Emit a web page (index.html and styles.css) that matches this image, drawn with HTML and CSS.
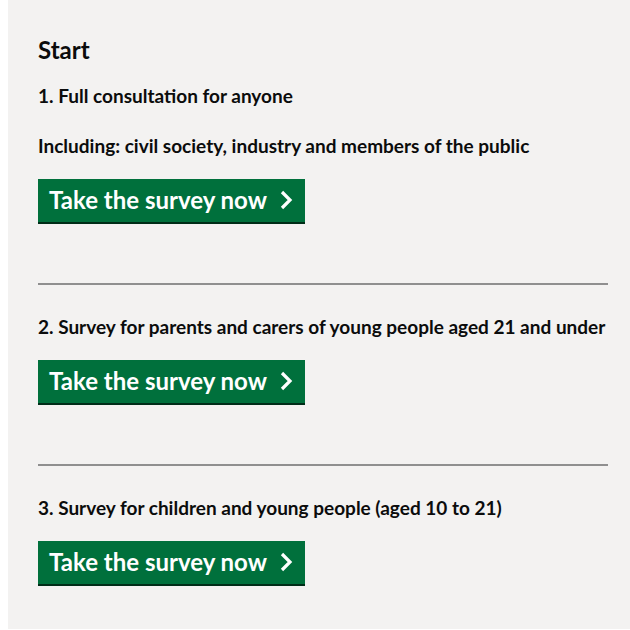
FILE: index.html
```html
<!DOCTYPE html>
<html lang="en">
<head>
    <meta charset="UTF-8">
    <meta name="viewport" content="width=device-width, initial-scale=1.0">
    <title>Start</title>
    <link rel="stylesheet" href="styles.css">
</head>
<body>

<div class="panel">
    <h2 class="titulo">Start</h2>

    <div class="seccion">
        <p class="texto">1. Full consultation for anyone</p>
        <p class="texto">Including: civil society, industry and members of the public</p>
        <a class="boton" href="#">Take the survey now
            <svg class="flecha" width="14" height="20" viewBox="0 0 14 20"><path d="M3 2 L11 10 L3 18" fill="none" stroke="#fff" stroke-width="3.2"/></svg>
        </a>
    </div>

    <hr class="separador">

    <div class="seccion">
        <p class="texto">2. Survey for parents and carers of young people aged 21 and under</p>
        <a class="boton" href="#">Take the survey now
            <svg class="flecha" width="14" height="20" viewBox="0 0 14 20"><path d="M3 2 L11 10 L3 18" fill="none" stroke="#fff" stroke-width="3.2"/></svg>
        </a>
    </div>

    <hr class="separador">

    <div class="seccion">
        <p class="texto">3. Survey for children and young people (aged 10 to 21)</p>
        <a class="boton" href="#">Take the survey now
            <svg class="flecha" width="14" height="20" viewBox="0 0 14 20"><path d="M3 2 L11 10 L3 18" fill="none" stroke="#fff" stroke-width="3.2"/></svg>
        </a>
    </div>
</div>

</body>
</html>
```

FILE: styles.css
```css
*{margin: 0; padding: 0; box-sizing: border-box;}

body{
    margin: 0 0 0 8px;
    font-family: Lato, "Noto Sans", sans-serif;
    color: #0b0c0c;
    background: #fff;
}
.panel{
    width: 630px;
    background: #f3f2f1;
    padding: 35px 30px 45px;
}
.titulo{
    font-size: 24px;
    line-height: 30px;
    font-weight: 700;
    margin-bottom: 18px;
}
.seccion{
    display: flex;
    flex-direction: column;
    align-items: flex-start;
    gap: 25px;
}
.texto{
    font-size: 19px;
    line-height: 25px;
    font-weight: 700;
    white-space: nowrap;
}
.boton{
    display: inline-flex;
    align-items: center;
    gap: 12px;
    height: 43px;
    padding: 0 12px 2px 11px;
    margin-top: -4px;
    background: #00703c;
    box-shadow: 0 2px 0 #002d18;
    color: #fff;
    font-size: 24px;
    font-weight: 700;
    text-decoration: none;
}
.separador{
    border: 0;
    border-top: 2px solid #8f8f8f;
    margin: 61px 0 29px;
}
```
